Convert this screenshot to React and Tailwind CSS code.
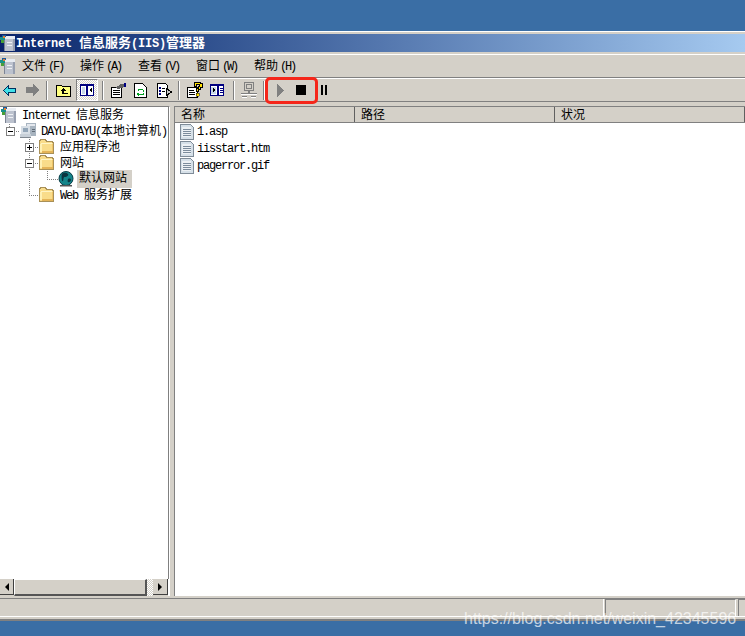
import React from "react";

const font = { fontFamily: '"Liberation Mono", "Noto Sans CJK SC", monospace' };

// latin glyphs are narrower than the CJK ones in the old bitmap font
const Mix = ({ text, latin = "tracking-[-1.2px]" }) => (
  <>
    {text.split(/([\x00-\x7f]+)/).filter(Boolean).map((part, i) =>
      /^[\x00-\x7f]/.test(part) ? (
        <span key={i} className={`whitespace-pre ${latin}`}>{part}</span>
      ) : (
        <span key={i}>{part}</span>
      )
    )}
  </>
);

const Folder = () => (
  <svg width="16" height="16" viewBox="0 0 16 16" shapeRendering="crispEdges">
    <path d="M0.500 3.500v-2h1v-1h5l1 2h6v1h1v11h-14z" fill="#f9dc8a" stroke="#a89058" />
    <path d="M2 4h11v1H2z" fill="#fff4c4" />
    <path d="M1 5h2v8H1z" fill="#fff0b4" />
    <path d="M3 12h11v2H3z" fill="#e4b458" />
    <path d="M13 5h1v7h-1z" fill="#eec468" />
  </svg>
);

const DocIcon = () => (
  <svg width="16" height="16" viewBox="0 0 16 16" shapeRendering="crispEdges">
    <path d="M1.500 0.500h10l3 3v12h-13z" fill="#d6e0e8" stroke="#7f8c98" />
    <path d="M3 3h9v10H3z" fill="#edf1f4" />
    <path d="M4 5h8v1H4zM4 7h8v1H4zM4 9h8v1H4zM4 11h8v1H4z" fill="#7c8c9c" />
  </svg>
);

const IisIcon = () => (
  <svg width="16" height="16" viewBox="0 0 16 16" shapeRendering="crispEdges">
    <path d="M4 3h11v13H4z" fill="#bcc2ce" />
    <path d="M5 1h10v3H5z" fill="#e8ecf2" />
    <path d="M4 4h1v12H4z" fill="#7c8494" />
    <path d="M13 4h2v12h-2z" fill="#98a0b0" />
    <path d="M7 7h5v1H7zM7 10h5v1H7z" fill="#eef0f4" />
    <path d="M2 0h4v2H2z" fill="#1c5c9c" />
    <path d="M0 2h5v3H0z" fill="#18908c" />
    <path d="M1 5h3v3H1z" fill="#48a038" />
    <path d="M3 1h2v2H3z" fill="#e08030" />
  </svg>
);

const ComputerIcon = () => (
  <svg width="16" height="16" viewBox="0 0 16 16" shapeRendering="crispEdges">
    <path d="M6 0h10v13H6z" fill="#a8b4c0" />
    <path d="M7 1h8v2H7z" fill="#e4e8ee" />
    <path d="M1 3h9v8H1z" fill="#d8dfe6" />
    <path d="M3 5h5v4H3z" fill="#93a6b8" />
    <path d="M0 11h11v3H0z" fill="#c8d0d8" />
    <path d="M0 14h11v1H0z" fill="#808890" />
    <path d="M12 6h3v1h-3zM12 8h3v1h-3z" fill="#606c78" />
  </svg>
);

const Globe = () => (
  <svg width="16" height="16" viewBox="0 0 16 16">
    <circle cx="8" cy="7.500" r="7" fill="#14858a" stroke="#083a44" />
    <path d="M4 3c2-2 5-1 6 0s-1 3-3 3-1 2-2 4-2-5-1-7zM10 8c2-1 3 0 3 1s-2 3-3 2 0-2 0-3z" fill="#0a3440" />
    <path d="M2 14h12v1.500H2z" fill="#555" />
  </svg>
);

const Expander = ({ open }) => (
  <svg width="9" height="9" viewBox="0 0 9 9" shapeRendering="crispEdges">
    <rect x="0.500" y="0.500" width="8" height="8" fill="#fff" stroke="#808080" />
    <path d="M2 4h5v1H2z" fill="#000" />
    {!open && <path d="M4 2h1v5H4z" fill="#000" />}
  </svg>
);

const Sep = () => <div className="w-[2px] h-[19px] bg-[#808080] border-r border-white" />;

const toolIcons = {
  back: (
    <svg width="13" height="11" viewBox="0 0 13 11" shapeRendering="crispEdges">
      <path d="M0.500 5.500 5.500 0.500v3h7v4h-7v3z" fill="#40e0e8" stroke="#003060" />
    </svg>
  ),
  forward: (
    <svg width="13" height="12" viewBox="0 0 13 12" shapeRendering="crispEdges">
      <path d="M13 6 7 0v3H0v6h7v3z" fill="#808080" />
    </svg>
  ),
  up: (
    <svg width="16" height="14" viewBox="0 0 16 14" shapeRendering="crispEdges">
      <path d="M0.500 2.500h5l1 1h8v10h-14z" fill="#ffff80" stroke="#000" />
      <path d="M7 5 4 8h2v3h6v-1H8V8h2z" fill="#000" />
    </svg>
  ),
  panel: (
    <svg width="14" height="12" viewBox="0 0 14 12" shapeRendering="crispEdges">
      <rect x="0.500" y="0.500" width="13" height="11" fill="#fff" stroke="#000080" />
      <path d="M0 0h14v2H0zM6 2h2v9H6z" fill="#000080" />
      <path d="M2 3h3v7H2z" fill="#c8d8e8" />
      <path d="M12 4v4L9 6z" fill="#000" />
    </svg>
  ),
  props: (
    <svg width="16" height="15" viewBox="0 0 16 15" shapeRendering="crispEdges">
      <path d="M1.500 4.500h10v10h-10z" fill="#fff" stroke="#000" />
      <path d="M3 7h7v1H3zM3 9h7v1H3zM3 11h7v1H3z" fill="#000" />
      <path d="M5 5 11 1h3v3l-5 2z" fill="#606060" />
      <path d="M14 0h2v4h-2z" fill="#000080" />
    </svg>
  ),
  refresh: (
    <svg width="13" height="15" viewBox="0 0 13 15" shapeRendering="crispEdges">
      <path d="M0.500 0.500h8l4 4v10h-12z" fill="#fff" stroke="#000" />
      <path d="M4 6h5v1h1v2H9V7H5v1H4zM3 10h2v1h4v-1h1v2H5v1H4v-1H3z" fill="#00a020" />
    </svg>
  ),
  exportList: (
    <svg width="15" height="15" viewBox="0 0 15 15" shapeRendering="crispEdges">
      <path d="M0.500 0.500h8l2 2v12h-10z" fill="#fff" stroke="#000" />
      <path d="M2 4h2v2H2zM2 7h2v2H2zM2 10h2v2H2z" fill="#000080" />
      <path d="M5 5h3v1H5zM5 8h3v1H5z" fill="#000" />
      <path d="M9.500 5.500 14.500 9 9.500 12.500z" fill="#c8c8c8" stroke="#000" />
    </svg>
  ),
  help: (
    <svg width="16" height="16" viewBox="0 0 16 16" shapeRendering="crispEdges">
      <path d="M0.500 5.500h10v10h-10z" fill="#fff" stroke="#000" />
      <path d="M2 8h5v1H2zM2 10h6v1H2zM2 12h6v1H2z" fill="#000" />
      <path d="M7.500 0.500h6v1h2v4h-2v2h-2v2h-2v-3h2v-2h1v-2h-3v2h-2z" fill="#ffe000" stroke="#000" />
      <path d="M9 11h3v3H9z" fill="#ffe000" stroke="#000" strokeWidth="0.500" />
    </svg>
  ),
  action: (
    <svg width="14" height="12" viewBox="0 0 14 12" shapeRendering="crispEdges">
      <rect x="0.500" y="0.500" width="13" height="11" fill="#fff" stroke="#000080" />
      <path d="M0 0h14v2H0zM7 2h2v9H7z" fill="#000080" />
      <path d="M1 3h5v7H1z" fill="#c8d8e8" />
      <path d="M10 4h3v1h-3zM10 6h3v1h-3zM10 8h3v1h-3z" fill="#000080" />
      <path d="M3 4v4l3-2z" fill="#000" />
    </svg>
  ),
  computer: (
    <svg width="16" height="16" viewBox="0 0 16 16" shapeRendering="crispEdges">
      <path d="M3.500 0.500h9v8h-9z" fill="#d4d0c8" stroke="#808080" />
      <path d="M5.500 2.500h5v4h-5z" fill="#d4d0c8" stroke="#808080" />
      <path d="M7 9h2v2H7zM0 11h16v1H0zM1 14h5v1H1zM10 14h5v1h-5z" fill="#808080" />
      <path d="M0 12h16v1H0zM1 15h5v1H1zM10 15h5v1h-5z" fill="#fff" />
    </svg>
  ),
  play: (
    <svg width="7" height="13" viewBox="0 0 7 13" shapeRendering="crispEdges">
      <path d="M0 0 7 6.500 0 13z" fill="#808080" />
    </svg>
  ),
};

const menus = [
  ["文件", "(F)"],
  ["操作", "(A)"],
  ["查看", "(V)"],
  ["窗口", "(W)"],
  ["帮助", "(H)"],
];

const treeRows = [
  { text: "DAYU-DAYU(本地计算机)", icon: <ComputerIcon />, pad: "pl-[20px]", exp: true, expPad: "pl-[6px]" },
  { text: "应用程序池", icon: <Folder />, pad: "pl-[39px]", exp: false, expPad: "pl-[25px]" },
  { text: "网站", icon: <Folder />, pad: "pl-[39px]", exp: true, expPad: "pl-[25px]" },
  { text: "默认网站", icon: <Globe />, pad: "pl-[58px]", selected: true },
  { text: "Web 服务扩展", icon: <Folder />, pad: "pl-[39px]" },
];

const files = ["1.asp", "iisstart.htm", "pagerror.gif"];

const columns = [
  { name: "名称", w: "w-[180px]" },
  { name: "路径", w: "w-[200px]" },
  { name: "状况", w: "flex-1" },
];

export default function App() {
  return (
    <div className="relative w-[745px] h-[636px] overflow-hidden bg-[#3a6ea5] flex flex-col pt-[31px]" style={font}>
      {/* window */}
      <div className="flex flex-col h-[590px] bg-[#d4d0c8] border-t border-white pt-[2px]">
        {/* title bar */}
        <div className="h-[18px] flex items-center bg-gradient-to-r from-[#0a246a] to-[#a6caf0]">
          <IisIcon />
          <span className="text-[13px] font-bold text-white whitespace-nowrap pt-[1px]">
            <Mix text="Internet 信息服务(IIS)管理器" latin="text-[12px] tracking-[-0.2px]" />
          </span>
        </div>

        {/* menu bar */}
        <div className="mt-[2px] h-[24px] flex items-center border-t border-white border-b border-b-[#808080]">
          <div className="w-[22px] flex shrink-0">
            <IisIcon />
          </div>
          {menus.map(([name, key]) => (
            <span key={name} className="w-[58px] text-[12px] text-black whitespace-nowrap pt-[2px]">
              {name}
              <span className="ml-[2px] text-[12px] tracking-[-2.2px]">{key}</span>
            </span>
          ))}
        </div>

        {/* toolbar */}
        <div className="h-[24px] flex items-center border-t border-white border-b border-b-[#808080] pl-[3px] relative">
          <div className="w-[23px] flex">{toolIcons.back}</div>
          <div className="w-[20px] flex">{toolIcons.forward}</div>
          <Sep />
          <div className="w-[8px]" />
          <div className="w-[20px] flex">{toolIcons.up}</div>
          <div className="w-[22px] h-[22px] flex items-center justify-center border border-[#808080] border-b-white border-r-white bg-[repeating-conic-gradient(#d4d0c8_0_25%,#ffffff_0_50%)] bg-[length:2px_2px]">
            {toolIcons.panel}
          </div>
          <div className="w-[4px]" />
          <Sep />
          <div className="w-[6px]" />
          <div className="w-[24px] flex">{toolIcons.props}</div>
          <div className="w-[23px] flex">{toolIcons.refresh}</div>
          <div className="w-[21px] flex">{toolIcons.exportList}</div>
          <Sep />
          <div className="w-[7px]" />
          <div className="w-[23px] flex">{toolIcons.help}</div>
          <div className="w-[23px] flex">{toolIcons.action}</div>
          <Sep />
          <div className="w-[6px]" />
          <div className="w-[22px] flex">{toolIcons.computer}</div>
          <Sep />
          <div className="w-[12px]" />
          <div className="w-[19px] flex">{toolIcons.play}</div>
          <div className="w-[25px] flex">
            <div className="w-[10px] h-[10px] bg-black" />
          </div>
          <div className="flex gap-[2px]">
            <div className="w-[2px] h-[10px] bg-black" />
            <div className="w-[2px] h-[10px] bg-black" />
          </div>
          {/* red annotation */}
          <div className="absolute left-[265px] top-[-2px] w-[53px] h-[27px] rounded-[5px] border-[3px] border-[#f5261a]" />
        </div>

        {/* panes */}
        <div className="flex h-[490px] mt-[4px]">
          <div className="w-[170px] flex flex-col bg-white border-t border-[#808080] border-r border-r-white">
            <div className="relative flex-1 border-r border-[#808080]">
              <svg className="absolute left-0 top-0" width="70" height="100" shapeRendering="crispEdges">
                <path d="M9.500 17v11M14 24.500h6M29.500 32v56M33 40.500h6M33 56.500h6M47.500 64v8M47 72.500h11M29 88.500h10" fill="none" stroke="#808080" strokeDasharray="1 1" />
              </svg>
              <div className="relative h-[16px] flex items-center gap-[5px] pl-[1px]">
                <IisIcon />
                <span className="text-[12px] text-black whitespace-nowrap pt-[1px]"><Mix text="Internet 信息服务" /></span>
              </div>
              {treeRows.map((r) => (
                <div key={r.text} className={`relative h-[16px] flex items-center gap-[4px] ${r.pad}`}>
                  {r.exp !== undefined && (
                    <div className={`absolute left-0 top-[4px] flex ${r.expPad}`}>
                      <Expander open={r.exp} />
                    </div>
                  )}
                  {r.icon}
                  <span className={`text-[12px] text-black whitespace-nowrap leading-[16px] pt-[1px] ${r.selected ? "bg-[#d4d0c8] -ml-[1px] pl-[2px] pr-[5px] pb-[1px]" : "pl-[1px]"}`}>
                    <Mix text={r.text} />
                  </span>
                </div>
              ))}
            </div>
            {/* horizontal scrollbar */}
            <div className="h-[17px] flex bg-[#d4d0c8] w-[169px] border-r border-white">
              <div className="w-[14px] h-[16px] flex items-center justify-center border-r border-b border-[#404040]">
                <div className="w-0 h-0 border-y-[4px] border-y-transparent border-r-[4px] border-r-black" />
              </div>
              <div className="w-[133px] border-t border-l border-white border-b-2 border-r-2 border-b-[#555] border-r-[#555]" />
              <div className="w-[6px] bg-[repeating-conic-gradient(#d4d0c8_0_25%,#ffffff_0_50%)] bg-[length:2px_2px]" />
              <div className="w-[15px] h-[16px] flex items-center justify-center border-r border-b border-[#404040]">
                <div className="w-0 h-0 border-y-[4px] border-y-transparent border-l-[4px] border-l-black" />
              </div>
            </div>
          </div>

          <div className="w-[4px]" />

          <div className="flex-1 flex flex-col bg-white border-t border-l border-[#808080]">
            <div className="h-[16px] flex bg-[#d4d0c8] border-b border-[#808080]">
              {columns.map((c) => (
                <div key={c.name} className={`${c.w} pl-[6px] text-[12px] leading-[15px] pt-[2px] text-black border-r border-[#606060]`}>{c.name}</div>
              ))}
            </div>
            <div className="pl-[4px] flex flex-col">
              {files.map((f) => (
                <div key={f} className="h-[17px] flex items-center gap-[2px]">
                  <DocIcon />
                  <span className="text-[12px] text-black whitespace-nowrap"><Mix text={f} /></span>
                </div>
              ))}
            </div>
          </div>
        </div>

        {/* status bar */}
        <div className="mt-[2px] flex flex-col border-t border-[#808080]">
          <div className="h-[17px] flex">
            <div className="w-[604px] border-r border-white" />
            <div className="w-[131px] ml-[1px] border-r border-r-white border-l border-l-[#808080] border-t border-t-[#808080]" />
            <div className="flex-1 ml-[2px] border-l border-t border-[#808080]" />
          </div>
          <div className="h-[1px] bg-white" />
          <div className="h-[2px]" />
          <div className="h-[2px] bg-[#808080]" />
        </div>
      </div>

      {/* watermark */}
      <span className="absolute left-[464px] top-[607px] text-[16px] text-white/70 whitespace-nowrap" style={{ fontFamily: '"Liberation Sans", sans-serif' }}>
        https://blog.csdn.net/weixin_42345596
      </span>
    </div>
  );
}
